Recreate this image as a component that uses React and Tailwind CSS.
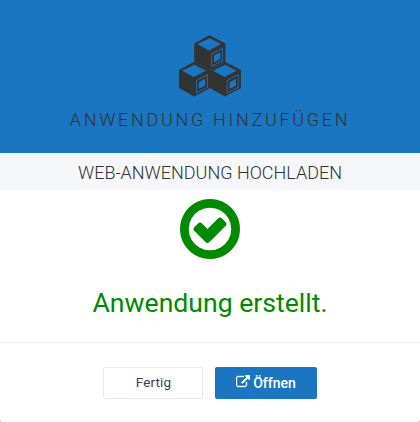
function Cube({ x, y }) {
  return (
    <g transform={`translate(${x} ${y})`}>
      <path fill="#333" d="M15 -0.2 31 8V26L15 34.4 -0.2 26V8Z" />
      <path fill="#1a76c1" d="M15.2 2.8 26.6 8.7 14.6 15 2.9 8.7Z" />
      <path fill="#1a76c1" d="M16.8 18.2 28.6 12V25.4L16.8 31.6Z" />
      <path fill="#333" d="M17.6 18.8 27.8 13.4V24.9L17.6 30.2Z" />
      <path fill="#1a76c1" d="M19.6 20.2 26 16.8V23.6L19.6 27Z" />
    </g>
  );
}

function CubesIcon() {
  return (
    <svg className="block h-[64px] w-[64px]" viewBox="0 0 64 64">
      <Cube x={16.4} y={1.4} />
      <Cube x={1.2} y={28} />
      <Cube x={32} y={28} />
    </svg>
  );
}

function CheckIcon() {
  return (
    <svg className="block h-[60px] w-[60px]" viewBox="128 128 1536 1536" fill="#008a00">
      <path d="M1299 813l-422 422q-19 19-45 19t-45-19l-294-294q-19-19-19-45t19-45l102-102q19-19 45-19t45 19l147 147 275-275q19-19 45-19t45 19l102 102q19 19 19 45t-19 45zm141 83q0-148-73-273t-198-198-273-73-273 73-198 198-73 273 73 273 198 198 273 73 273-73 198-198 73-273zm224 0q0 209-103 385.5t-279.5 279.5-385.5 103-385.5-103-279.5-279.5-103-385.5 103-385.5 279.5-279.5 385.5-103 385.5 103 279.5 279.5 103 385.5z" />
    </svg>
  );
}

function ExternalIcon() {
  return (
    <svg className="-mt-[2px] block h-[14px] w-[14px]" viewBox="0 0 1792 1792" fill="currentColor" stroke="currentColor" strokeWidth="50">
      <path d="M1408 928v320q0 119-84.5 203.5t-203.5 84.5h-832q-119 0-203.5-84.5t-84.5-203.5v-832q0-119 84.5-203.5t203.5-84.5h704q14 0 23 9t9 23v64q0 14-9 23t-23 9h-704q-66 0-113 47t-47 113v832q0 66 47 113t113 47h832q66 0 113-47t47-113v-320q0-14 9-23t23-9h64q14 0 23 9t9 23zm384-864v512q0 26-19 45t-45 19-45-19l-176-176-652 652q-10 10-23 10t-23-10l-114-114q-10-10-10-23t10-23l652-652-176-176q-19-19-19-45t19-45 45-19h512q26 0 45 19t19 45z" />
    </svg>
  );
}

export default function App() {
  return (
    <div className="h-[422px] w-[420px] bg-[#999]">
      <div className="flex h-full flex-col overflow-hidden rounded-b-[2px] bg-white font-['Roboto',sans-serif] text-[#333]">
        <header className="flex h-[153px] flex-col items-center bg-[#1a76c1] pt-[34px]">
          <CubesIcon />
          <h1 className="mt-[9px] whitespace-nowrap text-[18px] font-light leading-[26px] tracking-[2.7px]">ANWENDUNG HINZUFÜGEN</h1>
        </header>
        <h2 className="flex h-[37px] items-center justify-center bg-[#f5f7fa] pt-[2px] text-[18px] font-light">WEB-ANWENDUNG HOCHLADEN</h2>
        <main className="flex h-[152px] flex-col items-center pt-[9px]">
          <CheckIcon />
          <p className="mt-[25px] whitespace-nowrap text-[26.6px] leading-[38px] text-[#008a00]">Anwendung erstellt.</p>
        </main>
        <footer className="flex flex-1 justify-center gap-3 border-t border-[#eee] pt-6">
          <button className="h-8 w-[100px] rounded-[2px] border border-[#e8e8eb] pb-px pl-px text-[13.5px] tracking-[0.1px] text-[#3b4052]">Fertig</button>
          <button className="flex h-8 w-[102px] items-center justify-center gap-[3px] rounded-[2px] bg-[#1a76c1] text-[14px] font-medium text-white">
            <ExternalIcon />
            Öffnen
          </button>
        </footer>
      </div>
    </div>
  );
}
